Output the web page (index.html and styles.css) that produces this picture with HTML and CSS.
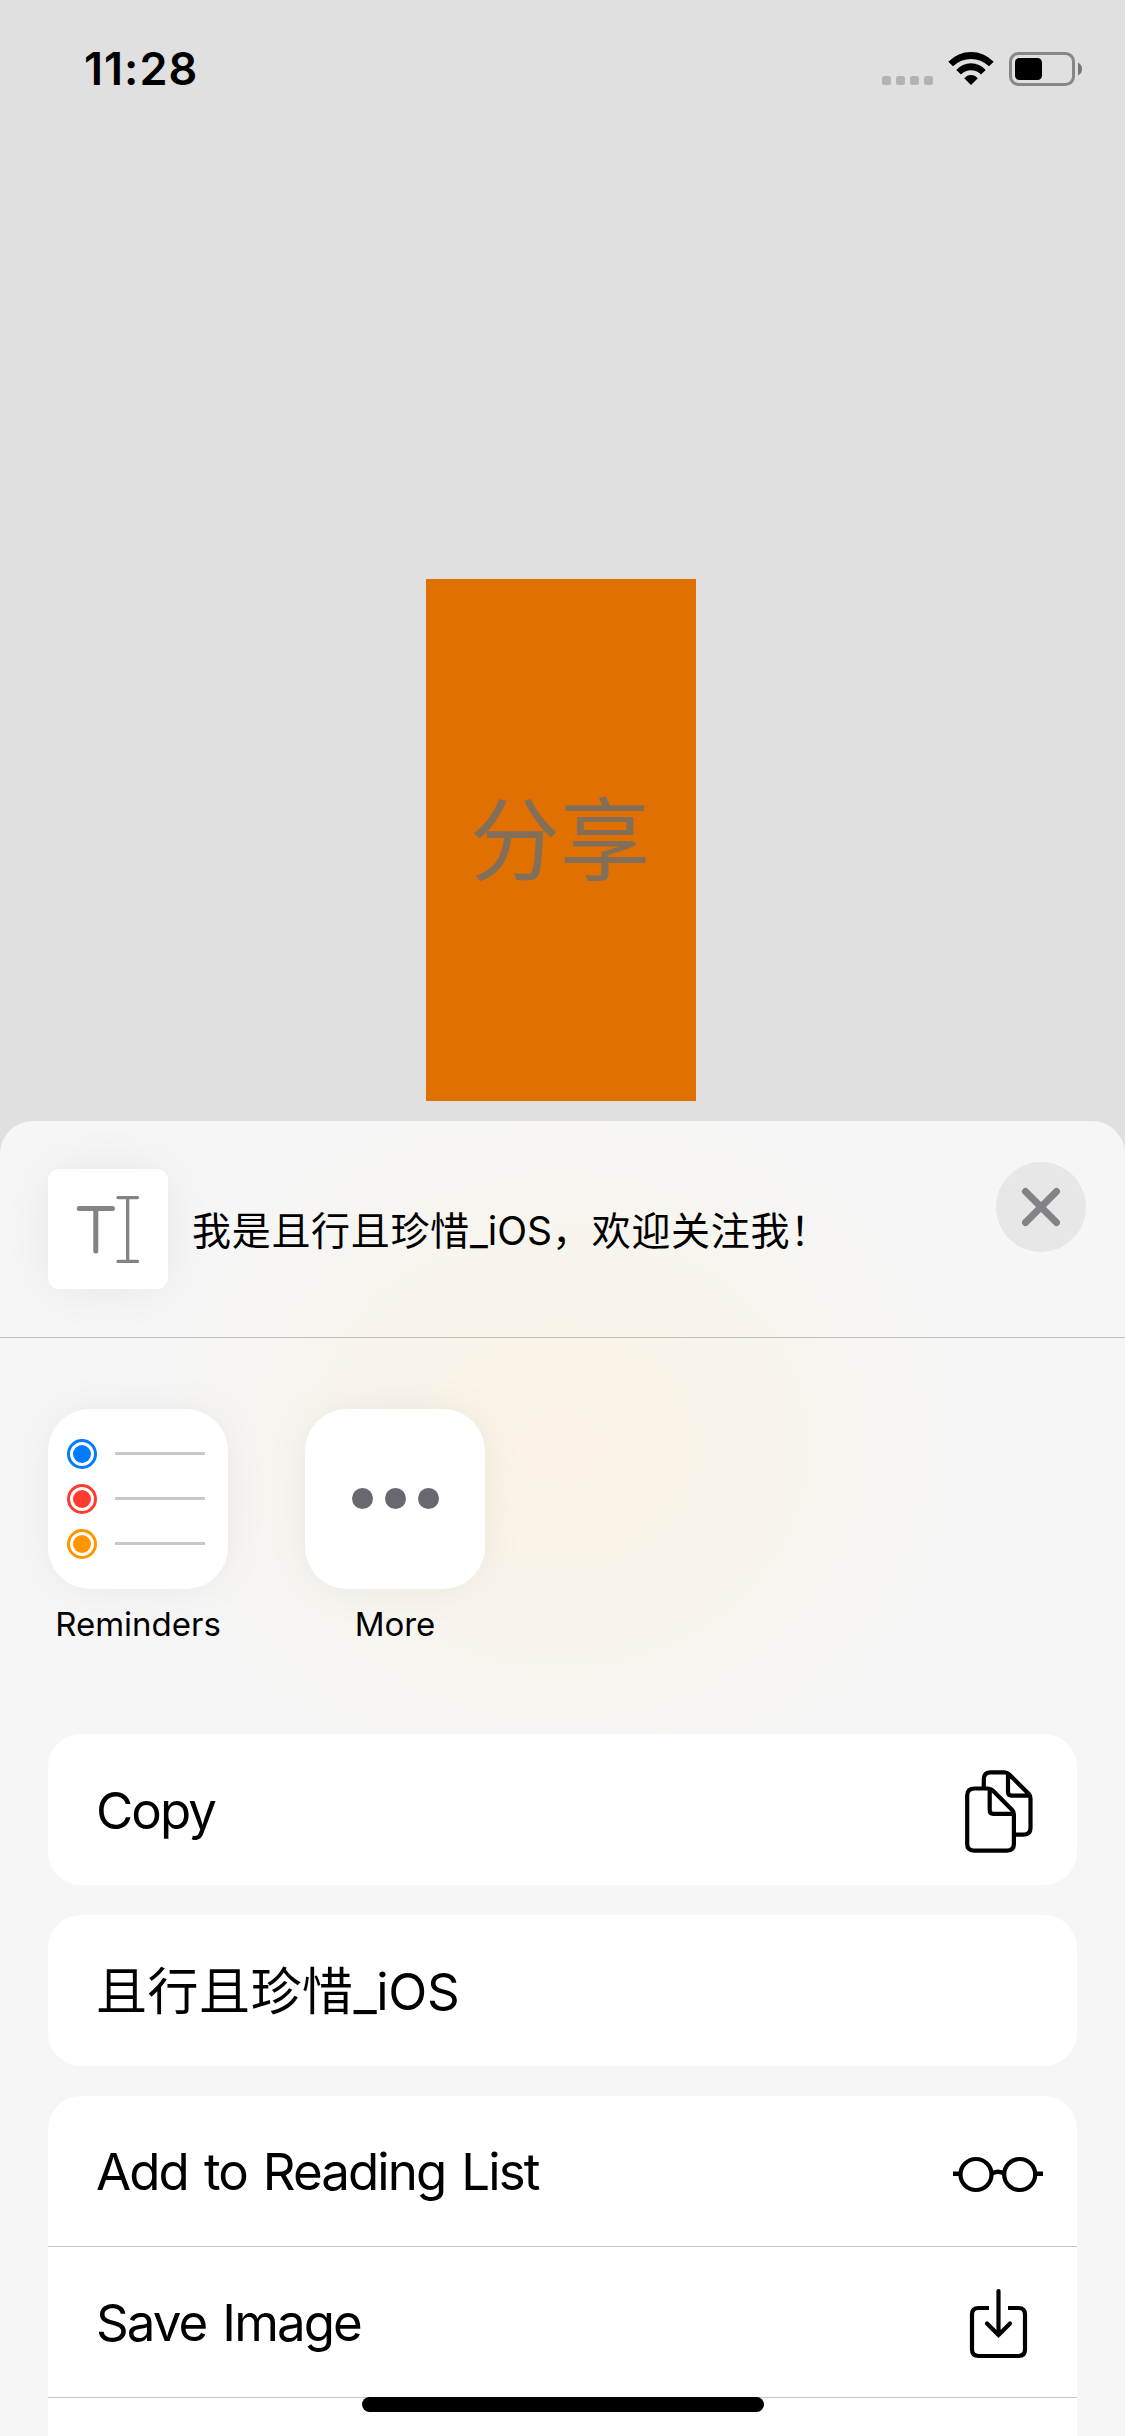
FILE: index.html
```html
<!DOCTYPE html>
<html lang="zh-CN">
<head>
<meta charset="utf-8">
<title>分享</title>
<link rel="stylesheet" href="styles.css">
</head>
<body>
<div class="screen">
  <header class="status">
    <span class="time">11:28</span>
    <div class="indicators">
      <svg class="signal" viewBox="0 0 51 9"><rect width="9" height="9" rx="2.5"/><rect x="14" width="9" height="9" rx="2.5"/><rect x="28" width="9" height="9" rx="2.5"/><rect x="42" width="9" height="9" rx="2.5"/></svg>
      <svg class="wifi" viewBox="0 0 46 33"><path d="M0.3 9.7Q10 0 23 0T45.700 9.700L41 14.300Q33 7 23 7T5 14.300ZM8.300 18Q14.500 11.300 23 11.300T37.700 18L33 22.500Q28.500 18.300 23 18.300T13 22.500ZM16.200 26.300Q19 22.900 23 22.900T29.800 26.300L23 33Z"/></svg>
      <svg class="battery" viewBox="0 0 73 34"><rect x="1.500" y="1.500" width="63" height="31" rx="8" fill="none" stroke="#878787" stroke-width="3"/><rect x="6" y="6" width="27" height="22" rx="4.500"/><path d="M69 10.500Q73 12.500 73 17T69 23.500Z" fill="#777"/></svg>
    </div>
  </header>
  <main class="stage"><div class="share-target">分享</div></main>
  <section class="sheet">
    <div class="sheet-head">
      <div class="thumb"><svg viewBox="0 0 120 120" fill="none" stroke="#838383" stroke-linecap="round"><path d="M31.200 39.500H64.400M47.800 39.500V82" stroke-width="5"/><path d="M70 28.600H89.500M70 92.400H89.500M79.700 28.600V92.400" stroke-width="3.300"/></svg></div>
      <p class="subject">我是且行且珍惜<span class="latin">_iOS</span>，欢迎关注我！</p>
      <button class="close" aria-label="Close"><svg viewBox="0 0 90 90"><path d="M29.500 29.500L60.500 60.500M60.500 29.500L29.500 60.500"/></svg></button>
    </div>
    <div class="apps">
      <div class="app">
        <div class="app-icon"><svg viewBox="0 0 180 180">
          <g fill="none" stroke-width="3"><circle cx="34" cy="45" r="13.500" stroke="#007aff"/><circle cx="34" cy="90" r="13.500" stroke="#ff3b30"/><circle cx="34" cy="135" r="13.500" stroke="#ff9500"/></g>
          <circle cx="34" cy="45" r="9" fill="#007aff"/><circle cx="34" cy="90" r="9" fill="#ff3b30"/><circle cx="34" cy="135" r="9" fill="#ff9500"/>
          <path d="M67.500 44.500H157.500M67.500 89.500H157.500M67.500 134.500H157.500" transform="translate(-.5)" stroke="#c7c7cc" stroke-width="3"/>
        </svg></div>
        <span class="app-name">Reminders</span>
      </div>
      <div class="app">
        <div class="app-icon"><svg viewBox="0 0 180 180" fill="#696871"><circle cx="57.500" cy="89.500" r="10.500"/><circle cx="90.500" cy="89.500" r="10.500"/><circle cx="123.500" cy="89.500" r="10.500"/></svg></div>
        <span class="app-name">More</span>
      </div>
    </div>
    <div class="groups">
      <div class="group"><div class="row"><span class="label">Copy</span>
        <svg class="icon" viewBox="0 0 90 90"><path d="M28.600 22V13.500Q28.600 6.800 35.300 6.800H49Q52 6.800 54.100 8.900L73.900 28.700Q75.300 30.100 75.300 33V62.500Q75.300 69 68.500 69H60M52.800 7V26.500Q52.800 30 56.300 30H74M19.700 22.900H32.500Q35.500 22.900 37.600 25L57.200 44.600Q58.700 46.100 58.700 49V78.500Q58.700 85 52 85H18.700Q12 85 12 78.500V29.600Q12 22.900 19.700 22.900M34.500 23V44.500Q34.500 48.300 38 48.300H58" transform="translate(2.2 .6)"/></svg></div></div>
      <div class="group"><div class="row"><span class="label label-cjk">且行且珍惜<span class="latin">_iOS</span></span></div></div>
      <div class="group last">
        <div class="row"><span class="label">Add to Reading List</span>
          <svg class="icon" viewBox="0 0 90 90"><circle cx="23" cy="48.500" r="15.500"/><circle cx="66.700" cy="48.500" r="15.500"/><path d="M0 47.700H7.500M82 47.700H90M38 48Q45 43.500 52 48" stroke-width="4.500"/></svg></div>
        <div class="row"><span class="label">Save Image</span>
          <svg class="icon" viewBox="0 0 90 90"><path d="M36 31H25.500Q19 31 19 37.500V72.500Q19 79 25.500 79H65.500Q72 79 72 72.500V37.500Q72 31 65.500 31H55"/><path d="M45.500 14V58M34 46.500L45.500 58L57 46.500" stroke-linecap="round"/></svg></div>
        <div class="row"></div>
      </div>
    </div>
  </section>
  <div class="home-bar"></div>
</div>
</body>
</html>
```
FILE: styles.css
```css
* { box-sizing: border-box; }
body { margin: 0; font-family: Inter, "Noto Sans CJK SC", sans-serif; color: #000; }
svg { display: block; }
.screen { position: relative; width: 1125px; height: 2436px; overflow: hidden; background: #e0e0e0; display: flex; flex-direction: column; }
.status { height: 138px; flex: none; display: flex; justify-content: space-between; align-items: flex-start; padding: 42px 43px 0 84px; }
.time { font-size: 45px; line-height: 54px; font-weight: 600; letter-spacing: 1px; }
.indicators { display: flex; align-items: flex-start; padding-top: 10px; }
.signal { width: 51px; height: 9px; margin: 24px 15px 0 0; fill: #b3b3b3; }
.wifi { width: 46px; height: 33px; margin-right: 15px; }
.battery { width: 73px; height: 34px; }
.stage { height: 983px; flex: none; padding: 441px 0 0 426px; }
.share-target { width: 270px; height: 522px; padding: 1px 2px 0 0; background: #e07000; color: #836f59; font-size: 90px; line-height: 522px; text-align: center; }
.sheet { flex: 1; border-radius: 33px 33px 0 0; background: radial-gradient(ellipse 410px 370px at 560px 325px, #fbf2e6, #f9f4e9 35%, #f7f5f0 68%, #f6f6f6); }
.sheet-head { height: 217px; border-bottom: 1px solid #c1c1c1; display: flex; align-items: flex-start; padding: 41px 39px 0 48px; }
.thumb { width: 120px; height: 120px; margin-top: 7px; border-radius: 11px; background: #fff; box-shadow: 0 0 48px rgba(0,0,0,.07); }
.subject { flex: 1; margin: 46px 0 0 24px; font-size: 39px; line-height: 46px; letter-spacing: .7px; white-space: nowrap; }
.subject .latin { letter-spacing: 0; }
.close { width: 90px; height: 90px; padding: 0; border: 0; border-radius: 50%; background: #e7e7e7; }
.close path { stroke: #838287; stroke-width: 7; stroke-linecap: round; }
.apps { display: flex; gap: 77px; height: 396px; padding: 71px 48px 0; }
.app { width: 180px; display: flex; flex-direction: column; align-items: center; gap: 15px; }
.app-icon { width: 180px; height: 180px; border-radius: 42px; background: #fff; box-shadow: 0 0 45px rgba(0,0,0,.06); }
.app-name { font-size: 33px; line-height: 40px; }
.groups { display: flex; flex-direction: column; gap: 30px; padding: 0 48px; }
.group { border-radius: 33px; background: #fff; }
.row { height: 151px; display: flex; align-items: center; justify-content: space-between; padding: 0 34px 0 48px; }
.last .row { border-bottom: 1px solid #c6c6c8; }
.label { padding-top: 2px; font-size: 51px; line-height: 62px; letter-spacing: -1.9px; word-spacing: 3.5px; }
.label-cjk { letter-spacing: .5px; }
.label-cjk .latin { letter-spacing: -.4px; }
.icon { width: 90px; height: 90px; fill: none; stroke: #000; stroke-width: 4.2; }
.home-bar { position: absolute; left: 362px; top: 2397px; width: 402px; height: 15px; border-radius: 8px; background: #000; }
```
